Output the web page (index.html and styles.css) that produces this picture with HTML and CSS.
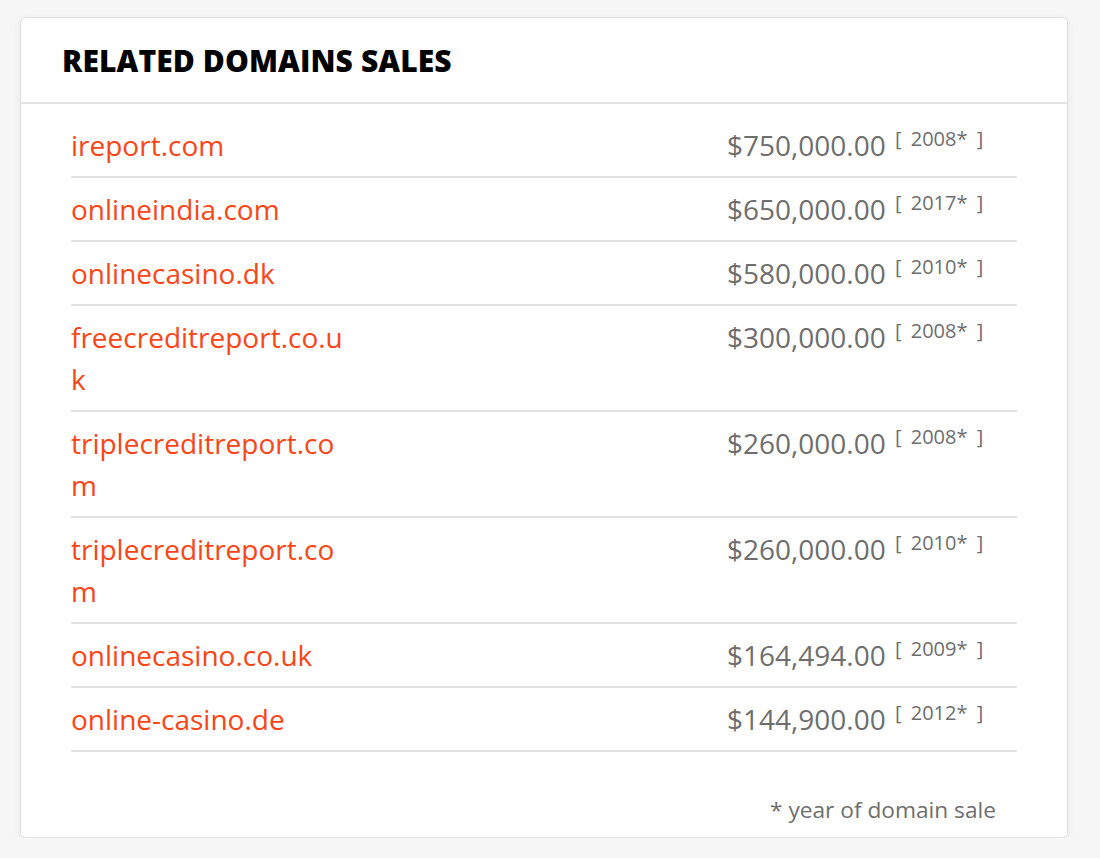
FILE: index.html
```html
<!DOCTYPE html>
<html lang="en">
<head>
<meta charset="utf-8">
<title>Related Domains Sales</title>
<link rel="stylesheet" href="styles.css">
</head>
<body>
<section class="card">
  <header class="card-header">
    <h2 class="card-title">RELATED DOMAINS SALES</h2>
  </header>
  <div class="card-body">
    <ul class="sales">
      <li class="sale"><a class="domain" href="#">ireport.com</a><span class="price">$750,000.00 <sup class="year">[ 2008* ]</sup></span></li>
      <li class="sale"><a class="domain" href="#">onlineindia.com</a><span class="price">$650,000.00 <sup class="year">[ 2017* ]</sup></span></li>
      <li class="sale"><a class="domain" href="#">onlinecasino.dk</a><span class="price">$580,000.00 <sup class="year">[ 2010* ]</sup></span></li>
      <li class="sale"><a class="domain" href="#">freecreditreport.co.uk</a><span class="price">$300,000.00 <sup class="year">[ 2008* ]</sup></span></li>
      <li class="sale"><a class="domain" href="#">triplecreditreport.com</a><span class="price">$260,000.00 <sup class="year">[ 2008* ]</sup></span></li>
      <li class="sale"><a class="domain" href="#">triplecreditreport.com</a><span class="price">$260,000.00 <sup class="year">[ 2010* ]</sup></span></li>
      <li class="sale"><a class="domain" href="#">onlinecasino.co.uk</a><span class="price">$164,494.00 <sup class="year">[ 2009* ]</sup></span></li>
      <li class="sale"><a class="domain" href="#">online-casino.de</a><span class="price">$144,900.00 <sup class="year">[ 2012* ]</sup></span></li>
    </ul>
    <p class="footnote">* year of domain sale</p>
  </div>
</section>
</body>
</html>
```
FILE: styles.css
```css
* { box-sizing: border-box; }

body {
  margin: 0;
  background: #f6f6f6;
  font-family: "Open Sans", "Liberation Sans", sans-serif;
}

.card {
  width: 1048px;
  margin: 17px 0 0 20px;
  height: 821px;
  background: #fff;
  border: 1px solid #e0e0e0;
  border-radius: 6px;
  box-shadow: 0 2px 8px rgba(0, 0, 0, 0.06);
}

.card-header {
  height: 86px;
  padding: 22px 41px 0;
  border-bottom: 2px solid #e3e3e3;
}

.card-title {
  margin: 0;
  font-size: 30px;
  line-height: 42px;
  font-weight: 800;
  color: #000;
  letter-spacing: 0.1px;
}

.card-body {
  padding: 10px 50px 0;
}

.sales {
  list-style: none;
  margin: 0;
  padding: 0;
}

.sale {
  display: grid;
  grid-template-columns: 280px 1fr 290px;
  padding: 10px 0;
  border-bottom: 2px solid #e0e0e0;
  font-size: 28px;
  line-height: 42px;
}

.domain {
  grid-column: 1;
  color: #fa4516;
  text-decoration: none;
  word-break: break-all;
}

.price {
  grid-column: 3;
  color: #6e6e6e;
  white-space: nowrap;
}

.year {
  margin-left: 2px;
  font-size: 20px;
  line-height: 1;
  vertical-align: 10px;
  word-spacing: 4px;
}

.footnote {
  margin: 41px 0 0;
  padding-right: 21px;
  text-align: right;
  font-size: 22.7px;
  line-height: 33px;
  color: #6e6e6e;
}
```
